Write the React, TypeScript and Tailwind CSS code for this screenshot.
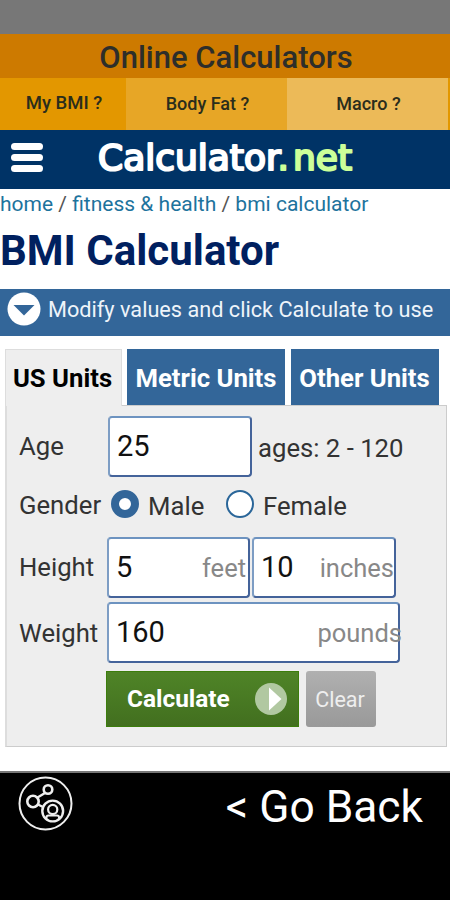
import { useState } from "react";

function Logo() {
  return (
    <svg width="260" height="40" viewBox="0 0 260 40" className="ml-[53px] shrink-0">
      <text
        x="2"
        y="32"
        fontFamily="'DejaVu Sans', sans-serif"
        fontSize="35.500"
        strokeWidth="2.200"
        strokeLinejoin="round"
        fill="#fff"
        stroke="#fff"
        textLength="254"
        lengthAdjust="spacingAndGlyphs"
      >
        Calculator
        <tspan fill="#cf9" stroke="#cf9">
          .
        </tspan>
        <tspan fill="#cf9" stroke="#cf9" dx="4">
          net
        </tspan>
      </text>
    </svg>
  );
}

function Header() {
  return (
    <header className="w-full">
      <div className="h-[34px] bg-[#777]" />
      <div className="h-11 bg-[#cd7a00] flex justify-center items-center">
        <h2 className="text-[31px] font-medium text-[#2d2e2a] pt-1 pl-0.5">Online Calculators</h2>
      </div>
      <div className="h-[52px] bg-[#e39700] flex text-[18px] font-medium text-[#2a2d1c] pr-0.5">
        <div className="w-[126px] bg-[#e39700] flex justify-center items-center text-[18.5px] pl-0.5">My BMI ?</div>
        <div className="w-[161px] bg-[#e7a626] flex justify-center items-center pb-0.5 pl-0.5">Body Fat ?</div>
        <div className="w-[161px] bg-[#ecba58] flex justify-center items-center pb-0.5 pl-0.5">Macro ?</div>
      </div>
      <div className="h-[59px] bg-[#003366] flex items-start pt-2">
        <div className="flex flex-col gap-1 pl-[11px] pt-[5px]">
          <span className="w-8 h-[7px] rounded-full bg-white" />
          <span className="w-8 h-[7px] rounded-full bg-white" />
          <span className="w-8 h-[7px] rounded-full bg-white" />
        </div>
        <Logo />
      </div>
    </header>
  );
}

function Tabs() {
  return (
    <div className="flex pl-[5px] text-[25.7px] font-bold text-white whitespace-nowrap">
      <div className="w-[117px] h-[57px] -mb-px pt-px pr-0.5 bg-[#eee] border border-b-0 border-[#ddd] text-black flex justify-center items-center relative">
        US Units
      </div>
      <div className="w-[158px] h-14 ml-[5px] pt-[3px] bg-[#336699] flex justify-center items-center">Metric Units</div>
      <div className="w-[148px] h-14 ml-1.5 pt-[3px] pr-px bg-[#336699] flex justify-center items-center">
        Other Units
      </div>
    </div>
  );
}

function Field({ value, unit, className }: { value: string; unit?: string; className: string }) {
  return (
    <div
      className={`h-[61px] bg-white border-2 border-t-[#6d93c0] border-l-[#7d9dc4] border-r-[#44639a] border-b-[#44639a] rounded-[4px] flex items-center justify-between pl-[7px] ${className}`}
    >
      <span className="text-[29px] text-[#111] pt-px">{value}</span>
      {unit && <span className="text-[25.5px] text-[#888] pt-px">{unit}</span>}
    </div>
  );
}

function Radio({ checked, onClick }: { checked: boolean; onClick: () => void }) {
  return (
    <button
      onClick={onClick}
      className={
        checked
          ? "size-7 -mt-0.5 rounded-full bg-white border-8 border-[#336699]"
          : "size-7 -mt-0.5 rounded-full bg-white border-2 border-[#2a6699]"
      }
    />
  );
}

function Form() {
  const [gender, setGender] = useState("male");

  return (
    <div className="w-[442px] h-[342px] ml-[5px] bg-[#eee] border border-[#ccc] border-l-2 border-l-[#ddd] text-[25.7px] text-[#333] whitespace-nowrap">
      <div className="flex items-center h-[61px] mt-2.5">
        <span className="w-[101px] pl-3">Age</span>
        <Field value="25" className="w-[144px]" />
        <span className="pl-1.5 pt-1">ages: 2 - 120</span>
      </div>
      <div className="flex items-center h-[55px]">
        <span className="w-[104px] pl-3 pt-0.5">Gender</span>
        <Radio checked={gender === "male"} onClick={() => setGender("male")} />
        <span className="w-[87px] pl-[9px] pt-1">Male</span>
        <Radio checked={gender === "female"} onClick={() => setGender("female")} />
        <span className="pl-[9px] pt-1">Female</span>
      </div>
      <div className="flex items-center h-[61px] mt-[5px]">
        <span className="w-[100px] pl-3">Height</span>
        <Field value="5" unit="feet" className="w-[143px] pr-0.5" />
        <Field value="10" unit="inches" className="w-[144px] ml-0.5" />
      </div>
      <div className="flex items-center h-[61px] mt-1">
        <span className="w-[100px] pl-3 pt-0.5">Weight</span>
        <div className="relative">
          <Field value="160" className="w-[293px]" />
          <span className="absolute -right-0.5 top-3 text-[25.5px] text-[#888]">pounds</span>
        </div>
      </div>
      <div className="flex mt-2 pl-[99px] gap-[7px]">
        <button className="w-[193px] h-14 bg-linear-to-b from-[#4f8427] to-[#426f1f] border border-[#3c7d0c] text-white text-[24.4px] font-bold flex items-center justify-between pl-5 pr-[11px]">
          <span className="pt-px">Calculate</span>
          <svg width="32" height="32" viewBox="0 0 32 32">
            <circle cx="16" cy="16" r="16" fill="#b1c8a1" />
            <path d="M14 4.500V27.500L26.500 16Z" fill="#fff" />
          </svg>
        </button>
        <button className="w-[70px] h-14 bg-linear-to-b from-[#b0b0b0] to-[#999] rounded-[3px] text-[#eee] text-[21.5px] flex justify-center items-center pt-0.5 pr-0.5">
          Clear
        </button>
      </div>
    </div>
  );
}

function Footer() {
  return (
    <footer className="h-[129px] bg-black border-t-2 border-[#777] flex items-start justify-between pl-[18px] pr-[27px] text-white">
      <svg width="56" height="56" viewBox="0 0 56 56" fill="none" stroke="#eee" strokeWidth="2" className="mt-[3px]">
        <circle cx="27.500" cy="27.500" r="26" />
        <circle cx="15" cy="25.500" r="5.700" strokeWidth="2.600" />
        <circle cx="30" cy="13.500" r="4.300" strokeWidth="2.600" />
        <path d="M19.500 21.500L27 17M20 28.500L25 31" strokeWidth="2.400" />
        <circle cx="34.700" cy="35" r="10.400" strokeWidth="2.400" />
        <circle cx="34.700" cy="33.500" r="4.600" strokeWidth="2.200" />
        <path d="M28.500 42.500V41Q28.500 39.500 30.500 39.500H39Q41 39.500 41 41V42.500" />
      </svg>
      <span className="text-[44.3px] leading-none pt-3">&lt; Go Back</span>
    </footer>
  );
}

function App() {
  return (
    <div className="w-[450px] h-[900px] bg-white overflow-hidden font-[Roboto,sans-serif]">
      <Header />
      <nav className="h-7 text-[21px] leading-[31px] text-[#1d739d] whitespace-nowrap">
        home <span className="text-[#555]">/</span> fitness &amp; health <span className="text-[#555]">/</span> bmi
        calculator
      </nav>
      <h1 className="h-[72px] pt-[10px] text-[42px] leading-[48px] font-bold text-[#00205f]">BMI Calculator</h1>
      <div className="h-[47px] bg-[#336699] flex items-start text-[21.7px] text-[#eef4fa] whitespace-nowrap">
        <svg width="34" height="34" viewBox="0 0 34 34" className="ml-[7px] mt-[3px] shrink-0">
          <circle cx="17" cy="17" r="16.500" fill="#fff" />
          <path d="M6.500 13H27.500L17 23.500Z" fill="#336699" />
        </svg>
        <span className="pl-[7px] pt-[5px]">Modify values and click Calculate to use</span>
      </div>
      <div className="h-[435px] pt-[13px]">
        <Tabs />
        <Form />
      </div>
      <Footer />
    </div>
  );
}

export default App;
